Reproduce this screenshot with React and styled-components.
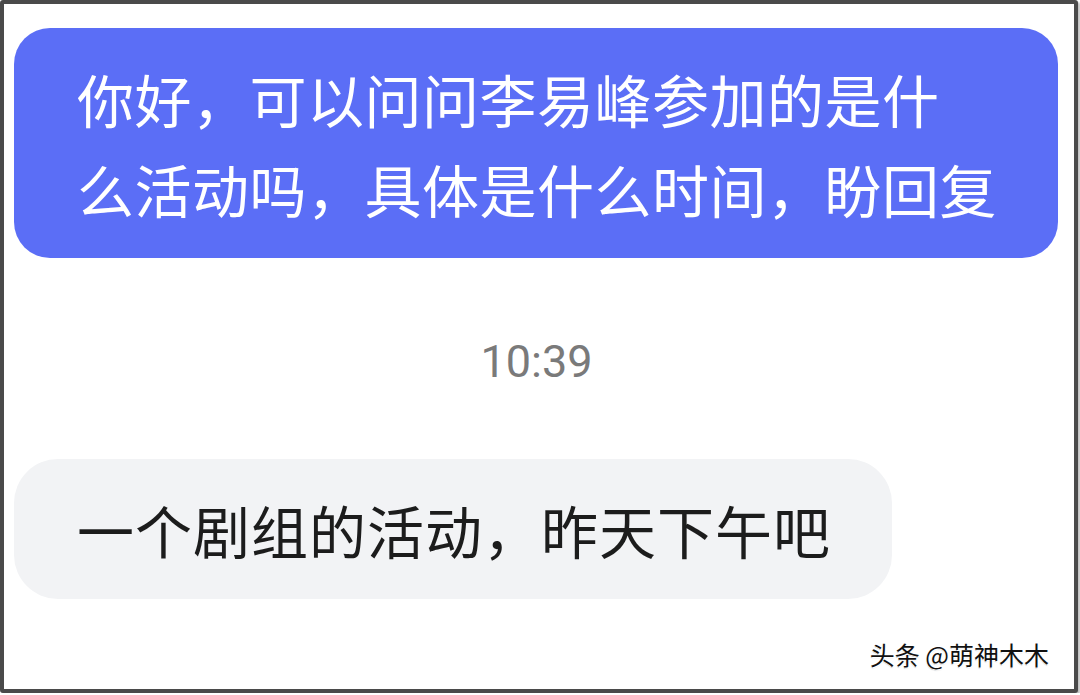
import React from "react";
import styled, { createGlobalStyle } from "styled-components";

const Global = createGlobalStyle`
  html, body { margin: 0; padding: 0; background: #ffffff; }
  body { font-family: "Noto Sans CJK SC", "Noto Sans", sans-serif; }
`;

const Frame = styled.div`
  box-sizing: border-box;
  width: 1078px;
  height: 693px;
  border: 4px solid #4a4a4a;
  border-radius: 3px;
  background: #ffffff;
  box-shadow: 2px 2px 2px rgba(0,0,0,0.25);
  display: flex;
  flex-direction: column;
  padding: 24px 15px 0 10px;
  position: relative;
`;

const Bubble = styled.div`
  box-sizing: border-box;
  width: ${(p) => p.$width}px;
  padding: 25px 20px 25px 63px;
  border-radius: ${(p) => p.$radius}px;
  background: ${(p) => (p.$mine ? "#5b6ef6" : "#f2f3f5")};
  color: ${(p) => (p.$mine ? "#ffffff" : "#1c1c1c")};
  font-size: 57px;
  line-height: 90px;
  letter-spacing: ${(p) => (p.$mine ? 0.5 : 1)}px;
  white-space: nowrap;
`;

const Time = styled.div`
  margin: 74px 0 67px;
  height: 60px;
  line-height: 60px;
  text-align: center;
  font-family: Roboto, "Noto Sans", sans-serif;
  font-size: 45px;
  color: #7a7a7a;
`;

const Watermark = styled.div`
  position: absolute;
  right: 25px;
  bottom: 17px;
  font-size: 25px;
  color: #111;
  text-shadow: 1px 1px 0 #fff, -1px 0 0 #fff, 0 1px 1px rgba(0,0,0,0.3);
`;

export default function App() {
  return (
    <>
      <Global />
      <Frame>
        <Bubble $mine $width={1044} $radius={36}>
          你好，可以问问李易峰参加的是什
          <br />
          么活动吗，具体是什么时间，盼回复
        </Bubble>
        <Time>10:39</Time>
        <Bubble $width={878} $radius={44}>
          一个剧组的活动，昨天下午吧
        </Bubble>
        <Watermark>头条 @萌神木木</Watermark>
      </Frame>
    </>
  );
}
